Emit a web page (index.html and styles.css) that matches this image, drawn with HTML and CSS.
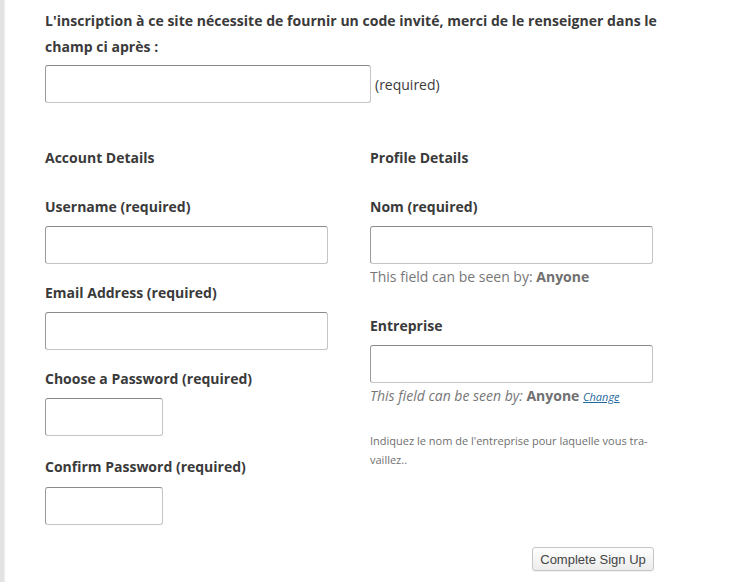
FILE: index.html
```html
<!DOCTYPE html>
<html lang="fr">
<head>
<meta charset="utf-8">
<link rel="stylesheet" href="styles.css">
</head>
<body>
<div class="page">
  <form class="form">
    <p class="intro">L'inscription à ce site nécessite de fournir un code invité, merci de le renseigner dans le champ ci après :</p>
    <div class="code-row">
      <input class="field code" type="text">
      <span class="req">(required)</span>
    </div>
    <div class="cols">
      <div class="col">
        <h4 class="section">Account Details</h4>
        <label class="label first">Username (required)</label>
        <input class="field wide" type="text">
        <label class="label">Email Address (required)</label>
        <input class="field wide" type="text">
        <label class="label">Choose a Password (required)</label>
        <input class="field short" type="password">
        <label class="label confirm">Confirm Password (required)</label>
        <input class="field short" type="password">
      </div>
      <div class="col right">
        <h4 class="section">Profile Details</h4>
        <label class="label first">Nom (required)</label>
        <input class="field wide" type="text">
        <p class="vis">This field can be seen by: <b>Anyone</b></p>
        <label class="label second">Entreprise</label>
        <input class="field wide" type="text">
        <p class="vis it">This field can be seen by: <b>Anyone</b> <a class="change" href="#">Change</a></p>
        <p class="desc">Indiquez le nom de l'entreprise pour laquelle vous tra-<br>vaillez..</p>
      </div>
    </div>
    <div class="submit-row">
      <button class="btn" type="button">Complete Sign Up</button>
    </div>
  </form>
</div>
</body>
</html>
```

FILE: styles.css
```css
html, body {
  margin: 0;
  padding: 0;
  background: #fff;
}
.page {
  min-height: 582px;
  border-left: 4px solid #e2e2e2;
  box-shadow: inset 2px 0 2px -1px #ececec;
  box-sizing: border-box;
  padding: 8px 0 0 41px;
  font-family: "Open Sans", "Liberation Sans", sans-serif;
  color: #3a3a3a;
}
.form {
  width: 609px;
}
.intro {
  margin: 0;
  font-size: 14px;
  font-weight: 700;
  line-height: 26px;
  width: 640px;
  letter-spacing: 0.03px;
}
.code-row {
  display: flex;
  align-items: center;
  margin-top: 5px;
  gap: 4px;
}
.field {
  display: block;
  box-sizing: border-box;
  height: 38px;
  margin: 0;
  border: 1px solid #c4c4c4;
  border-top-color: #8a8a8a;
  border-left-color: #9a9a9a;
  border-radius: 3px;
  background: #fff;
  font: 14px "Open Sans", sans-serif;
}
.code { width: 326px; }
.wide { width: 283px; }
.short { width: 118px; }
.req {
  font-size: 14px;
  color: #3a3a3a;
}
.cols {
  display: flex;
  margin-top: 42px;
}
.col {
  width: 325px;
  display: flex;
  flex-direction: column;
  align-items: flex-start;
}
.col.right { width: 284px; }
.section {
  margin: 0;
  font-size: 14px;
  font-weight: 700;
  line-height: 26px;
}
.label {
  display: block;
  font-size: 14px;
  font-weight: 700;
  line-height: 26px;
  margin: 16px 0 6px;
}
.label.first { margin-top: 23px; }
.label.confirm { margin-top: 18px; margin-bottom: 7px; }
.label.second { margin-top: 23px; }
.vis {
  margin: 0;
  font-size: 14px;
  line-height: 26px;
  color: #777;
}
.vis b { font-weight: 700; color: #707070; }
.vis.it { font-style: italic; }
.vis.it b { font-style: normal; }
.change {
  font-size: 11px;
  color: #1e6a9e;
  text-decoration: underline;
}
.desc {
  margin: 21px 0 0;
  font-size: 11px;
  line-height: 19px;
  color: #6f6f6f;
}
.submit-row {
  display: flex;
  justify-content: flex-end;
  margin-top: 22px;
  width: 609px;
}
.btn {
  height: 24px;
  width: 122px;
  padding: 0;
  border: 1px solid #c6c6c6;
  border-radius: 3px;
  background: linear-gradient(#fefefe, #ececec);
  box-shadow: 0 1px 1px rgba(0,0,0,0.06);
  font: 13px "Liberation Sans", Arial, sans-serif;
  color: #444;
}
```
